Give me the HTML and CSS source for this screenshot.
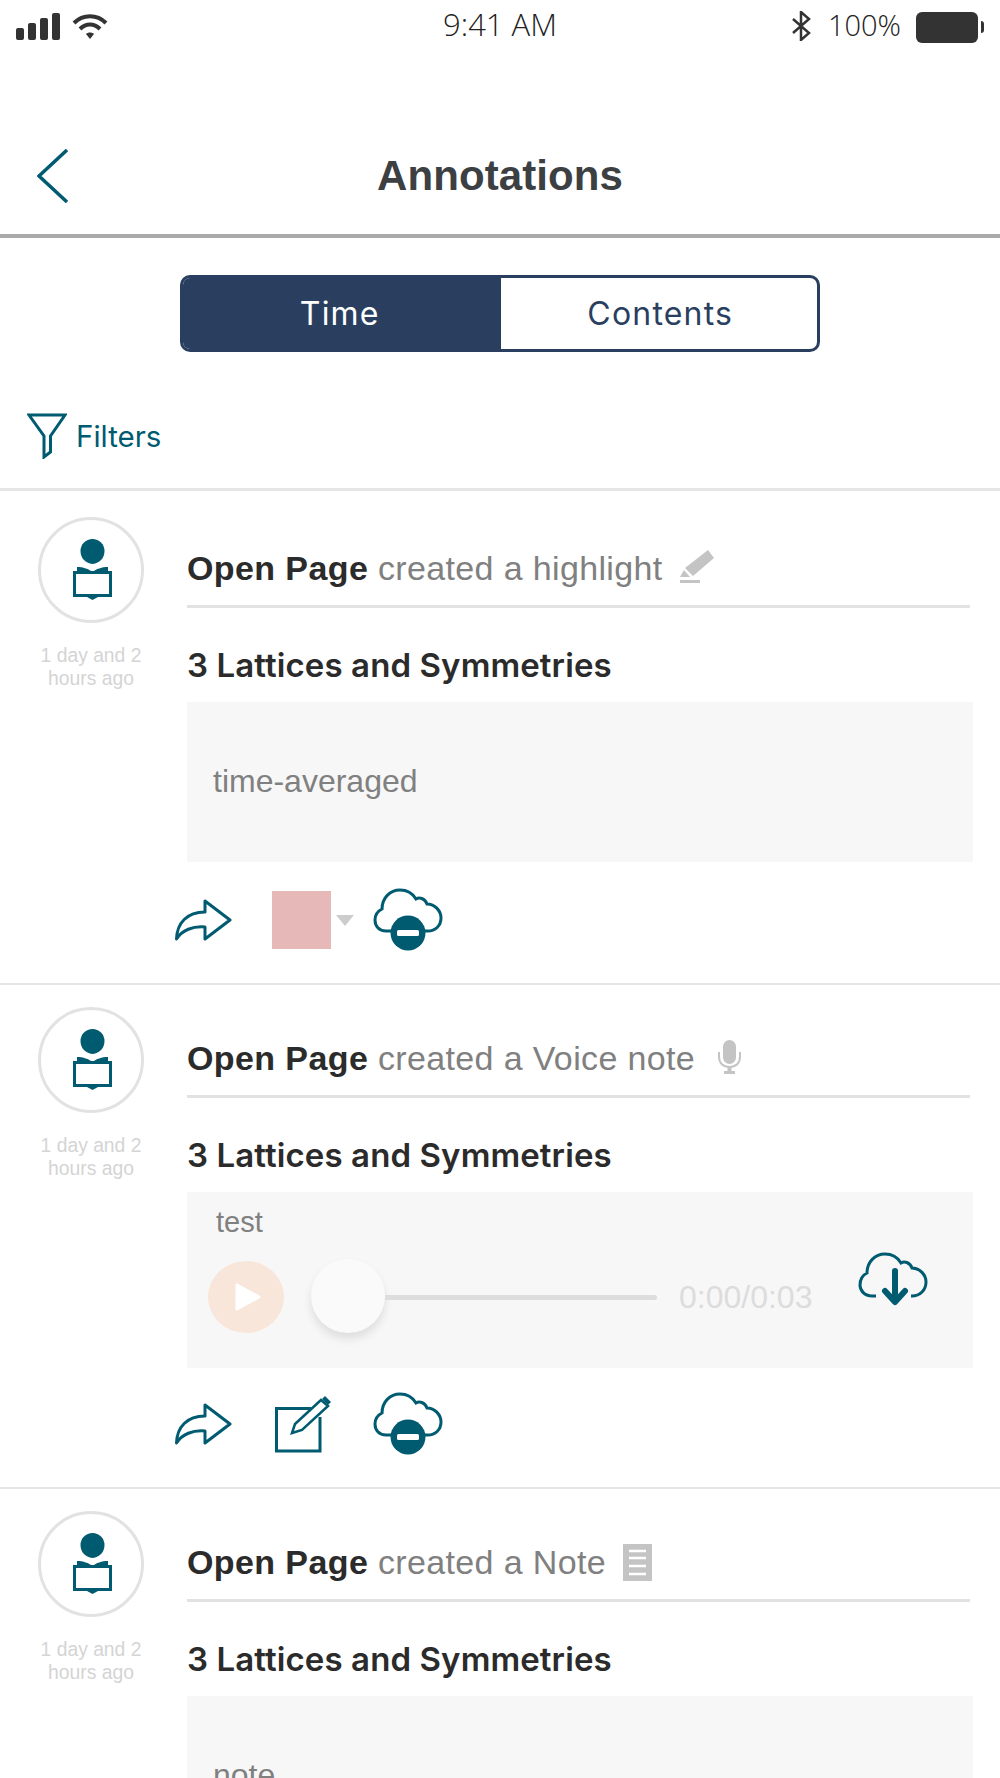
FILE: index.html
```html
<!DOCTYPE html>
<html lang="en">
<head>
    <meta charset="UTF-8">
    <meta name="viewport" content="width=device-width, initial-scale=1.0">
    <title>Annotations</title>
    <link rel="stylesheet" href="styles.css">
</head>
<body>
<div class="screen">
    <!-- Status bar -->
    <div class="status-bar">
        <div class="status-left">
            <svg width="46" height="28" viewBox="0 0 46 28" fill="#333">
                <rect x="0" y="15" width="8" height="12" rx="2"/>
                <rect x="12" y="10" width="8" height="17" rx="2"/>
                <rect x="24" y="5" width="8" height="22" rx="2"/>
                <rect x="36" y="0" width="8" height="27" rx="2"/>
            </svg>
            <svg class="wifi" width="36" height="26" viewBox="0 0 36 26" fill="none" stroke="#333" stroke-width="4">
                <path d="M2 9 C11 0 25 0 34 9"/>
                <path d="M8 15 C14 9 22 9 28 15"/>
                <path d="M14 20 L18 25 L22 20 C20 18 16 18 14 20 Z" fill="#333" stroke="none"/>
            </svg>
        </div>
        <div class="status-time">9:41 AM</div>
        <div class="status-right">
            <svg width="20" height="30" viewBox="0 0 20 30" fill="none" stroke="#333" stroke-width="2.5">
                <path d="M2 8 L18 22 L10 29 V1 L18 8 L2 22"/>
            </svg>
            <span class="battery-label">100%</span>
            <div class="battery"></div>
            <div class="battery-nub"></div>
        </div>
    </div>

    <!-- Navigation -->
    <div class="nav">
        <svg class="back" width="32" height="54" viewBox="0 0 32 54" fill="none" stroke="#005b70" stroke-width="3.5">
            <path d="M30 1 L2 27 L30 53"/>
        </svg>
        <h1>Annotations</h1>
    </div>

    <div class="segmented">
        <div class="segment active">Time</div>
        <div class="segment">Contents</div>
    </div>

    <div class="filters">
        <svg width="40" height="46" viewBox="0 0 40 46" fill="none" stroke="#005b70" stroke-width="3">
            <path d="M2 2 H38 L23.5 23 V39 L17 44 V23 Z"/>
        </svg>
        <span>Filters</span>
    </div>

    <div class="card-list">
        <!-- Highlight -->
        <div class="card">
            <div class="side">
                <div class="avatar">
                    <svg width="39" height="62" viewBox="0 0 39 62" fill="#005b70">
                        <path d="M19.5 26 C12 25 7.500 20 7.500 13 A12 12 0 0 1 31.500 13 C31.500 20 27 25 19.500 26 Z"/>
                        <path d="M4 29 C10 29 16 31 19.500 34 C23 31 29 29 35 29 V34 H4 Z"/>
                        <path d="M0 33 H39 V59 H25 L19.500 62 L14 59 H0 Z M3 36 V56 H36 V36 Z" fill-rule="evenodd"/>
                    </svg>
                </div>
                <div class="ago">1 day and 2<br>hours ago</div>
            </div>
            <div class="main">
                <div class="card-head">
                    <span><strong>Open Page</strong> created a highlight</span>
                    <svg width="34" height="34" viewBox="0 0 34 34" fill="#c4c4c4">
                        <path d="M28 0 L34 8 L13 26 L5 18 Z"/>
                        <path d="M4 20 L10 27 H0 Z"/>
                        <rect x="0" y="30" width="20" height="3"/>
                    </svg>
                </div>
                <div class="section-title">3 Lattices and Symmetries</div>
                <div class="text-box">time-averaged</div>
                <div class="actions">
                    <svg width="57" height="42" viewBox="0 0 57 42" fill="none" stroke="#005b70" stroke-width="3" stroke-linejoin="round">
                        <path d="M30 2 L55 21 L30 40 V28 C18 27 7 31 1.500 40 C2 24 12 13 30 13 Z"/>
                    </svg>
                    <div class="swatch-wrap">
                        <div class="swatch"></div>
                        <div class="caret"></div>
                    </div>
                    <svg width="70" height="64" viewBox="0 0 70 64" fill="none" stroke="#005b70" stroke-width="3">
                        <path d="M18 43 H13 C6 43 2 38 2 32 C2 27 5 23 9 21 C9 10 17 2 27 2 C34 2 40 6 43 11 C46 9 52 10 54 16 C62 16 68 23 68 30 C68 38 62 43 55 43 H50"/>
                        <circle cx="35" cy="45" r="17.500" fill="#005b70" stroke="none"/>
                        <rect x="24" y="42" width="22" height="6" rx="1.500" fill="#fff" stroke="none"/>
                    </svg>
                </div>
            </div>
        </div>

        <!-- Voice note -->
        <div class="card">
            <div class="side">
                <div class="avatar">
                    <svg width="39" height="62" viewBox="0 0 39 62" fill="#005b70">
                        <path d="M19.5 26 C12 25 7.500 20 7.500 13 A12 12 0 0 1 31.500 13 C31.500 20 27 25 19.500 26 Z"/>
                        <path d="M4 29 C10 29 16 31 19.500 34 C23 31 29 29 35 29 V34 H4 Z"/>
                        <path d="M0 33 H39 V59 H25 L19.500 62 L14 59 H0 Z M3 36 V56 H36 V36 Z" fill-rule="evenodd"/>
                    </svg>
                </div>
                <div class="ago">1 day and 2<br>hours ago</div>
            </div>
            <div class="main">
                <div class="card-head">
                    <span><strong>Open Page</strong> created a Voice note</span>
                    <svg class="mic" width="23" height="34" viewBox="0 0 23 34" fill="#c4c4c4">
                        <rect x="5" y="0" width="13" height="24" rx="6.500"/>
                        <path d="M1 12 V17 C1 23 5 27 11.500 27 C18 27 22 23 22 17 V12" fill="none" stroke="#c4c4c4" stroke-width="2"/>
                        <rect x="9.500" y="27" width="4" height="4"/>
                        <rect x="6" y="31" width="11" height="3"/>
                    </svg>
                </div>
                <div class="section-title">3 Lattices and Symmetries</div>
                <div class="voice-box">
                    <div class="voice-label">test</div>
                    <div class="player">
                        <div class="play">
                            <svg width="28" height="30" viewBox="0 0 28 30" fill="#fff" stroke="#fff" stroke-width="3" stroke-linejoin="round">
                                <path d="M3 3 L25 15 L3 27 Z"/>
                            </svg>
                        </div>
                        <div class="seek">
                            <div class="thumb"></div>
                            <div class="track"></div>
                        </div>
                        <div class="duration">0:00/0:03</div>
                        <svg class="download" width="70" height="54" viewBox="0 0 70 54" fill="none" stroke="#005b70" stroke-width="3">
                            <path d="M18 44 H14 C6 44 2 38 2 33 C2 27 5 23 9 21 C9 10 17 2 27 2 C34 2 40 6 43 11 C46 9 52 10 54 16 C62 16 68 23 68 30 C68 38 62 44 54 44 H53"/>
                            <path d="M37 19 V49 M27 39 L37 50 L47 39" stroke-width="6" stroke-linecap="round" stroke-linejoin="round"/>
                        </svg>
                    </div>
                </div>
                <div class="actions">
                    <svg width="57" height="42" viewBox="0 0 57 42" fill="none" stroke="#005b70" stroke-width="3" stroke-linejoin="round">
                        <path d="M30 2 L55 21 L30 40 V28 C18 27 7 31 1.500 40 C2 24 12 13 30 13 Z"/>
                    </svg>
                    <div class="swatch-wrap">
                        <svg class="edit" width="57" height="58" viewBox="0 0 57 58" fill="none" stroke="#005b70" stroke-width="3">
                            <path d="M36 13.500 H1.500 V56 H45 V22"/>
                            <path d="M17 38 L20 29 L46 5 L53 11 L27 35 Z" stroke-width="2.500"/>
                            <path d="M47 4 L50 1 L56 7 L53 10 Z" fill="#005b70" stroke="none"/>
                        </svg>
                    </div>
                    <svg width="70" height="64" viewBox="0 0 70 64" fill="none" stroke="#005b70" stroke-width="3">
                        <path d="M18 43 H13 C6 43 2 38 2 32 C2 27 5 23 9 21 C9 10 17 2 27 2 C34 2 40 6 43 11 C46 9 52 10 54 16 C62 16 68 23 68 30 C68 38 62 43 55 43 H50"/>
                        <circle cx="35" cy="45" r="17.500" fill="#005b70" stroke="none"/>
                        <rect x="24" y="42" width="22" height="6" rx="1.500" fill="#fff" stroke="none"/>
                    </svg>
                </div>
            </div>
        </div>

        <!-- Note -->
        <div class="card">
            <div class="side">
                <div class="avatar">
                    <svg width="39" height="62" viewBox="0 0 39 62" fill="#005b70">
                        <path d="M19.5 26 C12 25 7.500 20 7.500 13 A12 12 0 0 1 31.500 13 C31.500 20 27 25 19.500 26 Z"/>
                        <path d="M4 29 C10 29 16 31 19.500 34 C23 31 29 29 35 29 V34 H4 Z"/>
                        <path d="M0 33 H39 V59 H25 L19.500 62 L14 59 H0 Z M3 36 V56 H36 V36 Z" fill-rule="evenodd"/>
                    </svg>
                </div>
                <div class="ago">1 day and 2<br>hours ago</div>
            </div>
            <div class="main">
                <div class="card-head">
                    <span><strong>Open Page</strong> created a Note</span>
                    <svg width="29" height="37" viewBox="0 0 29 37">
                        <rect width="29" height="37" fill="#c4c4c4"/>
                        <path d="M6 7 H23 M6 14 H23 M6 22 H23 M6 30 H23" stroke="#fff" stroke-width="2.500"/>
                    </svg>
                </div>
                <div class="section-title">3 Lattices and Symmetries</div>
                <div class="text-box">note</div>
            </div>
        </div>
    </div>
</div>
</body>
</html>
```

FILE: styles.css
```css
* {
    box-sizing: border-box;
}
body {
    margin: 0;
    background-color: #fff;
    font-family: "Liberation Sans", Arial, sans-serif;
}
.screen {
    width: 1000px;
    height: 1778px;
    overflow: hidden;
}

/* Status bar */
.status-bar {
    height: 52px;
    padding: 0 16px;
    display: grid;
    grid-template-columns: 1fr auto 1fr;
    align-items: center;
}
.status-left {
    display: flex;
    align-items: flex-start;
    gap: 10px;
    padding-top: 1px;
}
.status-left .wifi {
    margin-top: 1px;
}
.status-time {
    margin-top: -4px;
    font-family: "Open Sans", sans-serif;
    font-weight: 300;
    font-size: 31px;
    color: #222;
}
.status-right {
    display: flex;
    align-items: center;
    justify-content: flex-end;
}
.battery-label {
    margin: -4px 15px 0 17px;
    font-family: "Open Sans", sans-serif;
    font-weight: 300;
    font-size: 29px;
    color: #222;
}
.battery {
    width: 62px;
    height: 31px;
    margin-top: 2px;
    background-color: #333;
    border-radius: 6px;
}
.battery-nub {
    width: 3px;
    height: 12px;
    margin: 2px 0 0 3px;
    background-color: #333;
    border-radius: 0 3px 3px 0;
}

/* Nav */
.nav {
    height: 186px;
    padding-top: 66px;
    border-bottom: 4px solid #aaa;
    display: grid;
    grid-template-columns: 1fr auto 1fr;
    align-items: center;
}
.nav .back {
    margin-left: 37px;
    grid-column: 1;
}
.nav h1 {
    grid-column: 2;
    margin: 0;
    font-size: 42px;
    font-weight: bold;
    letter-spacing: 0.1px;
    color: #3c4043;
}

/* Time / Contents switch */
.segmented {
    display: flex;
    width: 640px;
    height: 77px;
    margin: 37px auto 0;
    border: 3px solid #2a3f5f;
    border-radius: 10px;
    overflow: hidden;
}
.segment {
    flex: 1;
    display: flex;
    align-items: center;
    justify-content: center;
    padding-left: 3px;
    font-family: Inter, sans-serif;
    font-size: 32px;
    letter-spacing: 1.2px;
    color: #2a3f5f;
}
.segment.active {
    padding: 0 4px 0 0;
    background-color: #2a3f5f;
    color: #fff;
}

.filters {
    height: 139px;
    padding: 33px 0 2px 27px;
    border-bottom: 3px solid #e6e6e6;
    display: flex;
    align-items: center;
    gap: 9px;
    font-family: Inter, sans-serif;
    font-size: 29.500px;
    color: #005b70;
}

/* Cards */
.card-list {
    padding-top: 4px;
}
.card {
    display: flex;
    gap: 43px;
    padding: 22px 27px 33px 38px;
    border-bottom: 2px solid #e6e6e6;
}
.side {
    width: 106px;
    flex-shrink: 0;
}
.avatar {
    width: 106px;
    height: 106px;
    border: 3px solid #e2e2e2;
    border-radius: 50%;
    display: flex;
    align-items: center;
    justify-content: center;
    padding: 0 0 2px 3px;
}
.ago {
    margin-top: 21px;
    font-size: 19.300px;
    line-height: 23px;
    color: #d4d4d4;
    text-align: center;
}
.main {
    flex: 1;
    min-width: 0;
}
.card-head {
    height: 91px;
    margin-right: 3px;
    padding-top: 28px;
    border-bottom: 3px solid #e2e2e2;
    display: flex;
    align-items: flex-start;
    gap: 17px;
    font-size: 34px;
    line-height: 46px;
    letter-spacing: 0.35px;
    color: #808080;
}
.card-head strong {
    color: #2b2b2b;
    letter-spacing: 0.4px;
}
.card-head svg {
    margin-top: 5px;
}
.card-head .mic {
    margin-left: 6px;
}
.section-title {
    height: 94px;
    padding-top: 21px;
    font-family: Inter, sans-serif;
    font-size: 33px;
    font-weight: 600;
    line-height: 72px;
    letter-spacing: 0.1px;
    color: #2b2b2b;
}
.text-box {
    height: 160px;
    padding: 0 0 2px 26px;
    background-color: #f7f7f7;
    display: flex;
    align-items: center;
    font-size: 32px;
    color: #808080;
}

/* Voice note player */
.voice-box {
    height: 176px;
    margin-bottom: -2px;
    padding: 12px 0 0 21px;
    background-color: #f7f7f7;
}
.voice-label {
    margin-left: 8px;
    font-size: 29px;
    line-height: 36px;
    color: #808080;
}
.player {
    display: flex;
    align-items: center;
    height: 74px;
    margin-top: 20px;
}
.play {
    width: 76px;
    height: 72px;
    border-radius: 50%;
    background-color: #f8e6da;
    display: flex;
    align-items: center;
    justify-content: center;
    padding-left: 4px;
}
.seek {
    width: 346px;
    margin: -2px 0 0 27px;
    display: flex;
    align-items: center;
}
.thumb {
    width: 74px;
    height: 74px;
    flex-shrink: 0;
    border-radius: 50%;
    background-color: #fafafa;
    box-shadow: 0 6px 10px rgba(0, 0, 0, 0.1);
}
.track {
    flex: 1;
    height: 5px;
    margin-top: 3px;
    background-color: #ddd;
    border-radius: 0 3px 3px 0;
}
.duration {
    margin-left: 22px;
    font-size: 32px;
    color: #dcdcdc;
}
.download {
    margin: -36px 0 0 46px;
}

/* Action row */
.actions {
    display: grid;
    grid-template-columns: 97px 101px auto;
    align-items: center;
    margin-left: -12px;
    height: 88px;
    padding-top: 26px;
}
.swatch-wrap {
    display: flex;
    align-items: center;
    gap: 5px;
}
.swatch {
    width: 59px;
    height: 58px;
    background-color: #e6b8b8;
}
.caret {
    width: 0;
    height: 0;
    border-left: 9px solid transparent;
    border-right: 9px solid transparent;
    border-top: 11px solid #ccc;
}
.edit {
    margin-left: 3px;
}
```
